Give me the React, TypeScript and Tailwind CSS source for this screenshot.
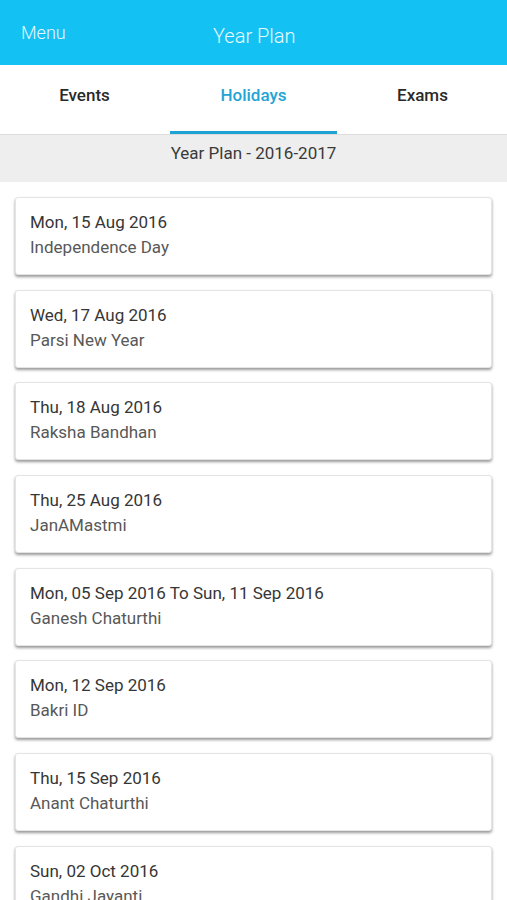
import React from "react";

const holidays = [
  { date: "Mon, 15 Aug 2016", name: "Independence Day" },
  { date: "Wed, 17 Aug 2016", name: "Parsi New Year" },
  { date: "Thu, 18 Aug 2016", name: "Raksha Bandhan" },
  { date: "Thu, 25 Aug 2016", name: "JanAMastmi" },
  { date: "Mon, 05 Sep 2016 To Sun, 11 Sep 2016", name: "Ganesh Chaturthi" },
  { date: "Mon, 12 Sep 2016", name: "Bakri ID" },
  { date: "Thu, 15 Sep 2016", name: "Anant Chaturthi" },
  { date: "Sun, 02 Oct 2016", name: "Gandhi Jayanti" },
];

function HolidayCard({ date, name }: { date: string; name: string }) {
  return (
    <li className="h-[78px] shrink-0 bg-white rounded-[3px] border border-[#e4e4e4] shadow-[0_2px_3px_rgba(0,0,0,0.4)] px-[14px] pt-[12px]">
      <p className="text-[17px] leading-[25px] text-[#363636]">{date}</p>
      <p className="text-[17px] leading-[25px] text-[#585858]">{name}</p>
    </li>
  );
}

export default function App() {
  return (
    <div
      className="w-[507px] h-[900px] overflow-hidden bg-white flex flex-col"
      style={{ fontFamily: "Roboto, 'Noto Sans', sans-serif" }}
    >
      {/* header */}
      <header className="h-[65px] shrink-0 bg-[#13c1f2] flex items-center px-[21px] relative">
        <span className="text-[18px] text-[#e6f8fe] font-light">Menu</span>
        <span className="absolute left-[213px] top-[21px] text-[20px] text-[#eaf9fe] font-light">Year Plan</span>
      </header>

      {/* tabs */}
      <nav className="h-[70px] shrink-0 grid grid-cols-3 border-b border-[#dcdcdc]">
        {["Events", "Holidays", "Exams"].map((t) => {
          const active = t === "Holidays";
          return (
            <div key={t} className="flex flex-col">
              <div
                className={
                  "flex-1 flex items-center justify-center text-[17px] font-medium pb-[4px] " +
                  (active ? "text-[#22a5d5]" : "text-[#2a2a2a]")
                }
              >
                {t}
              </div>
              <div className={"h-[3px] mx-px " + (active ? "bg-[#1fa3d4]" : "bg-transparent")} />
            </div>
          );
        })}
      </nav>

      <div className="h-[47px] shrink-0 bg-[#eeeeee] flex items-center justify-center text-[17px] text-[#3a3a3a] pb-[10px]">
        Year Plan - 2016-2017
      </div>

      <ul className="flex flex-col gap-[14.7px] px-[15px] pt-[15px] pb-6">
        {holidays.map((h) => (
          <HolidayCard key={h.date} date={h.date} name={h.name} />
        ))}
      </ul>
    </div>
  );
}
